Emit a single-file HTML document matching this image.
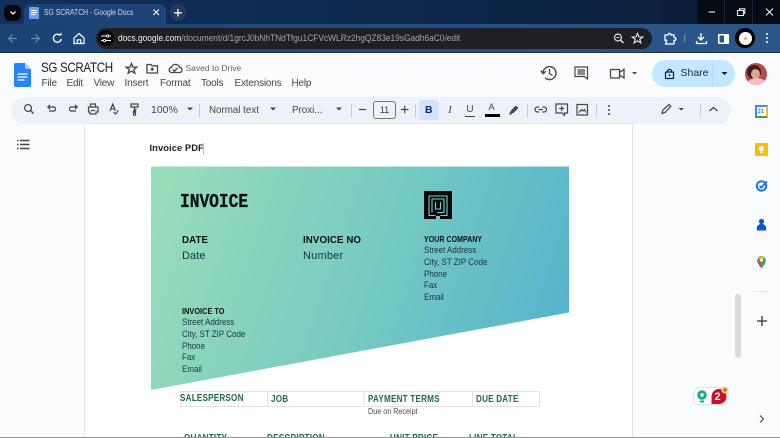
<!DOCTYPE html>
<html>
<head>
<meta charset="utf-8">
<style>
html,body{margin:0;padding:0;width:780px;height:438px;overflow:hidden;background:#f9fbfd;font-family:"Liberation Sans",sans-serif}
#r{position:relative;width:780px;height:438px;overflow:hidden}
.a{position:absolute;white-space:nowrap;transform-origin:0 50%}
svg{position:absolute;overflow:visible}
.ic{fill:none;stroke:#444746;stroke-width:1.3}
.m{font-size:10px;color:#444746;top:77px;line-height:13px;letter-spacing:-.2px}
.d{color:#17343c;font-size:9px;line-height:12px;transform:scaleX(.885)}
.b{color:#0a1214;font-weight:bold}
.g{color:#1f6b45;font-weight:bold;font-size:10.500px;letter-spacing:.3px;transform:scaleX(.77);line-height:14px}
</style>
</head>
<body>
<div id="r">
<!-- tab strip -->
<div class="a" style="left:0;top:0;width:780px;height:24px;background:linear-gradient(90deg,#12305c 0,#0f2b52 35%,#0c2345 70%,#0b1d38 100%)"></div>
<div class="a" style="left:4px;top:5px;width:17px;height:16px;background:#05070c;border-radius:6px"></div>
<svg style="left:9px;top:10px" width="8" height="6"><path d="M1.500 1.500 4 4 6.500 1.500" fill="none" stroke="#fff" stroke-width="1.300"/></svg>
<div class="a" style="left:24px;top:4px;width:142px;height:20px;background:#1d4476;border-radius:7px 7px 0 0"></div>
<div class="a" style="left:29px;top:7px;width:10px;height:12px;background:#6a9df2;border-radius:1px"></div>
<svg style="left:31px;top:10px" width="7" height="7"><path d="M0 .5H6M0 2.500H6M0 4.500H4.500" stroke="#fff" stroke-width="1"/></svg>
<div class="a" style="left:44px;top:6px;font-size:8.600px;line-height:13px;color:#cfdbea;transform:scaleX(.79)">SG SCRATCH - Google Docs</div>
<svg style="left:151.500px;top:8px" width="9" height="9"><path d="M1.500 1.500 7 7M7 1.500 1.500 7" stroke="#f0f4fa" stroke-width="1.100"/></svg>
<div class="a" style="left:170px;top:4px;width:16px;height:17px;background:#253a5a;border-radius:50%"></div>
<svg style="left:173px;top:8px" width="10" height="10"><path d="M5 1V8.500M1.200 4.800H8.800" stroke="#fff" stroke-width="1.300"/></svg>
<!-- window controls -->
<div class="a" style="left:697px;top:0;width:83px;height:24px;background:#060c14"></div>
<div class="a" style="left:724px;top:0;width:1px;height:24px;background:#1a2330"></div>
<div class="a" style="left:752px;top:0;width:1px;height:24px;background:#1a2330"></div>
<svg style="left:706px;top:6px" width="70" height="14"><path d="M2.500 6H9" stroke="#d8dde4" stroke-width="1.200"/><path d="M31.500 4.500H37.500V9.500H31.500ZM33.500 4.500V2.800H38.800V7.500H37.500" fill="none" stroke="#e8ebef" stroke-width="1.100"/><path d="M60 2.500 67 9.500M67 2.500 60 9.500" stroke="#e8ebef" stroke-width="1.100"/></svg>
<!-- toolbar -->
<div class="a" style="left:0;top:24px;width:780px;height:29px;background:linear-gradient(90deg,#1a4273 0,#234d80 50%,#2c5789 100%)"></div>
<div class="a" style="left:0;top:51.500px;width:780px;height:1.500px;background:#1a3350"></div>
<svg style="left:8px;top:32px" width="78" height="13">
<path d="M1 6.500H9M4.500 2.500 .8 6.500 4.500 10.500" fill="none" stroke="#6f90b8" stroke-width="1.200"/>
<path d="M23 6.500H31M27.500 2.500 31.200 6.500 27.500 10.500" fill="none" stroke="#6f90b8" stroke-width="1.200"/>
<path d="M52 3.200A4 4 0 1 0 53.300 7" fill="none" stroke="#fff" stroke-width="1.300"/><path d="M50 3.500H53.500V.5Z" fill="#fff"/>
<path d="M71 1.500 76 6V11.500H66V6Z M69.300 11.500V7.800H72.700V11.500" fill="none" stroke="#fff" stroke-width="1.200"/>
</svg>
<div class="a" style="left:96px;top:28px;width:556px;height:20.500px;background:#1f2023;border-radius:11px"></div>
<div class="a" style="left:98px;top:30px;width:16px;height:16px;background:#050505;border-radius:50%"></div>
<svg style="left:101px;top:34px" width="10" height="9"><path d="M0 2H5M8 2H10M0 6.500H2M5 6.500H10" stroke="#fff" stroke-width="1"/><circle cx="6.500" cy="2" r="1.200" fill="none" stroke="#fff" stroke-width=".8"/><circle cx="3.500" cy="6.500" r="1.200" fill="none" stroke="#fff" stroke-width=".8"/></svg>
<div class="a" style="left:118px;top:32px;font-size:9.600px;line-height:13px;color:#f1f3f4;letter-spacing:-.03px;transform:scaleX(.877)">docs.google.com<span style="color:#a3a6aa">/document/d/1grcJ0bNhTNdTfgu1CFVcWLRz2hgQZ83e19sGadh6aC0/edit</span></div>
<svg style="left:612px;top:32px" width="36" height="13">
<circle cx="6" cy="5.500" r="3.500" fill="none" stroke="#dfe1e4" stroke-width="1.200"/><path d="M8.500 8 11.500 11" stroke="#dfe1e4" stroke-width="1.400"/><path d="M4.500 5.500H7.500" stroke="#dfe1e4"/>
<path d="M25.500 1.500 27 5H30.800L27.800 7.300 28.900 11 25.500 8.800 22.100 11 23.200 7.300 20.200 5H24Z" fill="none" stroke="#e8eaed" stroke-width="1.100"/>
</svg>
<svg style="left:663px;top:32px" width="110" height="14">
<path d="M2 3H5C5 .8 8 .8 8 3H11V5.500C13.500 5.500 13.500 8.500 11 8.500V12H2.500L3.500 9.500C4.500 7.500 1.500 7.500 2 9Z" fill="none" stroke="#fff" stroke-width="1.300"/>
<path d="M21.700 2V10" stroke="#7f9ab8" stroke-width="1"/>
<path d="M38 1V7.500M35 5 38 8 41 5M33.500 9V11.500H43.500V9" fill="none" stroke="#fff" stroke-width="1.300"/>
<rect x="55" y="2" width="11" height="10" fill="#fff" rx="1"/><rect x="56.500" y="3.500" width="4.500" height="7" fill="#2a5585"/>
<circle cx="104" cy="2" r="1" fill="#fff"/><circle cx="104" cy="6" r="1" fill="#fff"/><circle cx="104" cy="10" r="1" fill="#fff"/>
</svg>
<div class="a" style="left:735px;top:28px;width:20px;height:20px;background:#000;border-radius:50%"></div>
<div class="a" style="left:739px;top:32px;width:12.500px;height:12.500px;background:#fff;border-radius:50%"></div>
<div class="a" style="left:743.500px;top:36.500px;width:3.500px;height:3.500px;background:#efb52e;border-radius:50%"></div>
<!-- app header -->
<div class="a" style="left:0;top:53px;width:780px;height:385px;background:#f9fbfd"></div>
<svg style="left:14px;top:63px" width="18" height="24"><path d="M1.500 0H11L17 6V22.500A1.500 1.500 0 0 1 15.500 24H1.500A1.500 1.500 0 0 1 0 22.500V1.500A1.500 1.500 0 0 1 1.500 0Z" fill="#2684fc"/><path d="M11 0 17 6H12.500A1.500 1.500 0 0 1 11 4.500Z" fill="#a6c8fa"/><path d="M3.500 11H13.500M3.500 14H13.500M3.500 17H10.500" stroke="#fff" stroke-width="1.200"/></svg>
<div class="a" style="left:41px;top:58.500px;font-size:13.800px;line-height:17px;color:#1f1f1f;letter-spacing:-.4px;transform:scaleX(.84)">SG SCRATCH</div>
<svg style="left:125px;top:62px" width="60" height="13">
<path d="M6.500 1.500 8 5.200H11.800L8.800 7.600 9.900 11.300 6.500 9.100 3.100 11.300 4.200 7.600 1.200 5.200H5Z" class="ic" stroke-width="1.100"/>
<path d="M22 2.500H26L27 3.800H32.500V11H22Z M27.200 5.500V9M25.500 7.200H29" class="ic" stroke-width="1.100"/>
<path d="M46 10.500H54.500A2.600 2.600 0 0 0 54.500 5.300 4.200 4.200 0 0 0 46.500 5.300 2.700 2.700 0 0 0 46 10.500ZM47.800 7.800 49.500 9.200 52.500 6" class="ic" stroke-width="1.050"/>
</svg>
<div class="a" style="left:185.500px;top:61.500px;font-size:8.500px;line-height:12px;color:#5f6368">Saved to Drive</div>
<div class="a m" style="left:41.500px">File</div>
<div class="a m" style="left:66.500px">Edit</div>
<div class="a m" style="left:93.500px">View</div>
<div class="a m" style="left:124.500px">Insert</div>
<div class="a m" style="left:160px">Format</div>
<div class="a m" style="left:201px">Tools</div>
<div class="a m" style="left:234.500px">Extensions</div>
<div class="a m" style="left:291.500px">Help</div>
<!-- right header -->
<svg style="left:540px;top:64px" width="210" height="18">
<path d="M3 9A6.500 6.500 0 1 1 5 13.800" fill="none" stroke="#444746" stroke-width="1.400"/><path d="M.8 6.500 3.100 9.800 6 7.200" fill="none" stroke="#444746" stroke-width="1.300"/><path d="M9.500 5V9.500L12.500 11.500" fill="none" stroke="#444746" stroke-width="1.300"/>
<path d="M35 3H47.500V15L44.500 12.500H35Z M37.500 6H45M37.500 8H45M37.500 10H45" fill="none" stroke="#444746" stroke-width="1.200"/>
<path d="M71 5.500H79.500V14H71A1 1 0 0 1 70.500 13V6.500A1 1 0 0 1 71 5.500ZM79.500 8.500 84 5.500V14L79.500 11" fill="none" stroke="#444746" stroke-width="1.300"/>
<path d="M92 8H97L94.500 10.500Z" fill="#444746"/>
</svg>
<div class="a" style="left:652px;top:60px;width:83px;height:26.500px;background:#c2e7ff;border-radius:14px"></div>
<div class="a" style="left:712px;top:60px;width:1px;height:26.500px;background:#b4dcf7"></div>
<svg style="left:664px;top:67px" width="11" height="13"><path d="M3.500 5V3.500A2.300 2.300 0 0 1 7.500 3.500V5" fill="none" stroke="#001d35" stroke-width="1.100"/><rect x="1.500" y="5" width="8" height="6.500" rx=".8" fill="none" stroke="#001d35" stroke-width="1.200"/><circle cx="5.500" cy="8.200" r="1" fill="#001d35"/></svg>
<div class="a" style="left:680.500px;top:66px;font-size:10.500px;line-height:14px;color:#0d2b45">Share</div>
<svg style="left:720px;top:71px" width="9" height="6"><path d="M1.500 1H7.500L4.500 4Z" fill="#001d35"/></svg>
<div class="a" style="left:745px;top:62.500px;width:22px;height:22px;border-radius:50%;background:#b64a4c;overflow:hidden">
<div class="a" style="left:2px;top:2px;width:14px;height:14px;background:#3a1f1e;border-radius:50%"></div>
<div class="a" style="left:6px;top:6px;width:9px;height:10px;background:#dfa68f;border-radius:50%"></div>
<div class="a" style="left:3px;top:15px;width:17px;height:9px;background:#f3bfc2;border-radius:50%"></div>
</div>
<!-- format toolbar -->
<div class="a" style="left:11px;top:97px;width:720px;height:26.500px;background:#edf2fa;border-radius:14px"></div>
<svg style="left:0;top:97px" width="780" height="27">
<g fill="none" stroke="#444746" stroke-width="1.200">
<circle cx="28" cy="11" r="3.400"/><path d="M30.500 13.500 33.500 16.500" stroke-width="1.500"/>
<path d="M49 14H54.500A2.500 2.500 0 0 0 54.500 10H48M50 8 47.800 10 50 12"/>
<path d="M76 14H70.500A2.500 2.500 0 0 1 70.500 10H77M75 8 77.200 10 75 12"/>
<path d="M90 10H98V15H96V17H90V15H88.500V10ZM90.500 10V7H95.500V10M91 13.500H95"/>
<path d="M110 14 112.800 7 115.500 14M111 11.800H114.500M113.500 15 115.500 17 118.500 13.500"/>
<path d="M131 7H138V10H131ZM134.500 10V12.500L136.500 12.500M134.500 12.500V16M133.500 14H135.500V18H133.500Z"/>
</g>
<path d="M187 10.500H193L190 13.500Z" fill="#444746"/>
<path d="M199.500 7V20" stroke="#c7ccd3"/>
<path d="M270 10.500H276L273 13.500Z" fill="#444746"/>
<path d="M336 10.500H342L339 13.500Z" fill="#444746"/>
<path d="M351.500 7V20" stroke="#c7ccd3"/>
<path d="M359 12.500H366" stroke="#444746" stroke-width="1.200"/>
<path d="M401 12.500H408.500M404.700 8.700V16.300" stroke="#444746" stroke-width="1.200"/>
<path d="M415.500 7V20" stroke="#c7ccd3"/><path d="M527.500 7V20" stroke="#c7ccd3"/><path d="M596.500 7V20" stroke="#c7ccd3"/><path d="M700.500 7V20" stroke="#c7ccd3"/>
<g fill="none" stroke="#444746" stroke-width="1.200">
<path d="M539 10H537.500A2.500 2.500 0 0 0 537.500 15H539M542.500 10H544A2.500 2.500 0 0 1 544 15H542.500M538.500 12.500H543"/>
<path d="M556 7H567.500V16H564.500V18.500L562 16H556ZM561.700 9V14M559.200 11.500H564.200"/>
<path d="M577 7.500H587.500V18H577ZM579 15.500 581.500 12.500 583 14 584.500 12.500 586 15.500"/>
<path d="M662 16.500 663 13 669 7.500 670.800 9.300 665 15.500Z"/>
<path d="M709.500 14 713.500 10.500 717.500 14" stroke-width="1.300"/>
</g>
<circle cx="609" cy="9" r="1" fill="#444746"/><circle cx="609" cy="13" r="1" fill="#444746"/><circle cx="609" cy="17" r="1" fill="#444746"/>
<path d="M678.500 11H684L681.250 13.500Z" fill="#444746"/>
</svg>
<div class="a" style="left:151px;top:103px;font-size:10.500px;line-height:14px;color:#444746">100%</div>
<div class="a" style="left:209px;top:102.500px;font-size:10.500px;line-height:14px;color:#444746;transform:scaleX(.93)">Normal text</div>
<div class="a" style="left:291.500px;top:102.500px;font-size:10.500px;line-height:14px;color:#444746;transform:scaleX(.93)">Proxi...</div>
<div class="a" style="left:373px;top:101px;width:21px;height:16px;border:1px solid #747775;border-radius:3px;text-align:center;font-size:9px;line-height:16px;color:#333">11</div>
<div class="a" style="left:419px;top:100px;width:19.500px;height:20px;background:#d3e3fd;border-radius:3px;text-align:center;font-size:10.500px;line-height:20px;font-weight:bold;color:#0b2e6a">B</div>
<div class="a" style="left:445px;top:103px;width:10px;text-align:center;font-size:11px;line-height:14px;font-style:italic;color:#444746;font-family:'Liberation Serif',serif">I</div>
<div class="a" style="left:465px;top:103px;width:10px;text-align:center;font-size:10px;line-height:13px;color:#444746;border-bottom:1px solid #444746;height:13px">U</div>
<div class="a" style="left:484px;top:102px;width:15px;text-align:center;font-size:9.500px;line-height:12px;color:#444746">A</div>
<div class="a" style="left:484.500px;top:114px;width:15px;height:2.500px;background:#000"></div>
<svg style="left:508px;top:103px" width="13" height="12"><path d="M1.500 10.500 3 7.500 8 2.500 10.500 5 5.500 10Z" fill="#444746"/><path d="M1 11H4" stroke="#444746"/></svg>
<!-- doc page -->
<div class="a" style="left:85px;top:124px;width:547px;height:314px;background:#fff;box-shadow:0 0 0 1px #e3e6ea"></div>
<svg style="left:16px;top:139px" width="14" height="12"><g stroke="#444746" stroke-width="1.500"><path d="M4 1.500H13.500M4 5.500H13.500M4 9.500H13.500"/><path d="M1 1.500H2.500M1 5.500H2.500M1 9.500H2.500"/></g></svg>
<div class="a" style="left:149.500px;top:142px;font-size:9.300px;line-height:13px;font-weight:bold;color:#1b1b1b;letter-spacing:.1px">Invoice PDF</div>
<div class="a" style="left:202.500px;top:143px;width:1px;height:12px;background:#bbb"></div>
<!-- invoice graphic -->
<svg style="left:151px;top:166px" width="418" height="225">
<defs><linearGradient id="gr" gradientUnits="userSpaceOnUse" x1="0" y1="30" x2="420" y2="170"><stop offset="0" stop-color="#99dcba"/><stop offset=".5" stop-color="#79cbc2"/><stop offset="1" stop-color="#54b3cc"/></linearGradient></defs>
<path d="M0 .5H418V146.500L0 224Z" fill="url(#gr)"/>
</svg>
<div class="a b" style="left:180px;top:191.500px;font-family:'Liberation Mono',monospace;font-size:19px;line-height:21px;letter-spacing:-.1px;transform:scaleX(.86);-webkit-text-stroke:.25px #0a1214">INVOICE</div>
<div class="a b" style="left:182px;top:234px;font-size:9.700px;line-height:13px;letter-spacing:.1px">DATE</div>
<div class="a" style="left:182px;top:249px;font-size:11px;line-height:14px;letter-spacing:.1px;color:#17343c">Date</div>
<div class="a b" style="left:303px;top:234px;font-size:9.700px;line-height:13px;letter-spacing:.1px">INVOICE NO</div>
<div class="a" style="left:303px;top:249px;font-size:11px;line-height:14px;letter-spacing:.2px;color:#17343c">Number</div>
<svg style="left:424px;top:191px" width="28" height="28"><path d="M0 0H28V28H16V25H12V28H0Z" fill="#050708"/><g fill="none" stroke="#7fd0c4" stroke-width="1.100"><path d="M11.500 24.500H5V5H23V24.500H16.500"/><path d="M8 21.500V8H20V21.500H13"/><path d="M11.500 11V18H16.500V11"/></g></svg>
<div class="a b" style="left:424px;top:233px;font-size:8.500px;line-height:12px;letter-spacing:.1px;transform:scaleX(.82)">YOUR COMPANY</div>
<div class="a d" style="left:424px;top:245px;line-height:11.750px;white-space:pre">Street Address
City, ST ZIP Code
Phone
Fax
Email</div>
<div class="a b" style="left:182px;top:305px;font-size:8.500px;line-height:12px;letter-spacing:.05px;transform:scaleX(.86)">INVOICE TO</div>
<div class="a d" style="left:182px;top:317px;line-height:11.750px;white-space:pre">Street Address
City, ST ZIP Code
Phone
Fax
Email</div>
<!-- table -->
<svg style="left:180px;top:390px" width="361" height="18"><g fill="none" stroke="#e2e2e2" stroke-width="1"><path d="M.500 1.500H359.500V16.500H.500ZM87.500 1.500V16.500M184 1.500V16.500M292.500 1.500V16.500"/></g></svg>
<div class="a g" style="left:180px;top:390.500px">SALESPERSON</div>
<div class="a g" style="left:271px;top:391.500px">JOB</div>
<div class="a g" style="left:367.500px;top:391.500px">PAYMENT TERMS</div>
<div class="a g" style="left:476px;top:391.500px">DUE DATE</div>
<div class="a" style="left:367.500px;top:406px;font-size:8px;line-height:12px;color:#4b4b4b;transform:scaleX(.9)">Due on Receipt</div>
<div class="a g" style="left:184px;top:431px">QUANTITY</div>
<div class="a g" style="left:266.500px;top:431px">DESCRIPTION</div>
<div class="a g" style="left:390px;top:431px">UNIT PRICE</div>
<div class="a g" style="left:468.500px;top:431px">LINE TOTAL</div>
<!-- scrollbar -->
<div class="a" style="left:734.500px;top:294px;width:6px;height:64px;background:#d9dbde;border-radius:3px"></div>
<!-- side panel -->
<div class="a" style="left:755px;top:105px;width:12.500px;height:13px;background:#fff;border:2px solid #4285f4;box-sizing:border-box;border-bottom-color:#34a853;border-right-color:#fbbc04"></div>
<div class="a" style="left:757.500px;top:107.500px;font-size:6px;line-height:8px;color:#4285f4;font-weight:bold">31</div>
<div class="a" style="left:755px;top:142.500px;width:12.500px;height:13px;background:#fbbc04;border-radius:1px"></div>
<svg style="left:755px;top:142.500px" width="13" height="13"><circle cx="6.300" cy="5.500" r="2.600" fill="#fff"/><rect x="5" y="8.500" width="2.600" height="1.500" fill="#fff"/></svg>
<svg style="left:755px;top:179px" width="14" height="14"><circle cx="6.500" cy="7" r="4.700" fill="none" stroke="#1a73e8" stroke-width="2"/><path d="M4.500 7 6.200 8.700 12 2.500" fill="none" stroke="#1a73e8" stroke-width="1.800"/></svg>
<svg style="left:756px;top:218px" width="12" height="14"><circle cx="5.500" cy="3.500" r="2.600" fill="#0b57d0"/><path d="M.8 12.500V10A4 3.500 0 0 1 10.200 10V12.500Z" fill="#0b57d0"/></svg>
<svg style="left:756px;top:255px" width="12" height="14"><path d="M5.500 13.500C3.500 10.500 1.200 8.500 1.200 5.200A4.300 4.300 0 0 1 5.500 1Z" fill="#ea4335"/><path d="M5.500 13.500C7.500 10.500 9.800 8.500 9.800 5.200A4.300 4.300 0 0 0 5.500 1Z" fill="#34a853"/><path d="M2 3 5.500 1 9 2.500 5.500 5.500Z" fill="#fbbc04"/><path d="M2 3 1.200 6 3 8 5.500 5.500Z" fill="#4285f4"/><circle cx="5.500" cy="5.200" r="1.500" fill="#fff"/></svg>
<div class="a" style="left:753px;top:291px;width:15px;height:1px;background:#e3e6ea"></div>
<svg style="left:755.500px;top:315px" width="12" height="12"><path d="M6 1V11M1 6H11" stroke="#333" stroke-width="1.300"/></svg>
<svg style="left:758px;top:414px" width="8" height="10"><path d="M2 1.500 5.500 5 2 8.500" fill="none" stroke="#555" stroke-width="1.200"/></svg>
<!-- badge -->
<div class="a" style="left:692.500px;top:387px;width:36px;height:18px;background:#fff;border:1px solid #dfe3e6;border-radius:7px 9px 9px 4px;box-sizing:border-box"></div>
<svg style="left:696px;top:385px" width="36" height="22">
<circle cx="6" cy="10" r="4.800" fill="#1aa98c"/><circle cx="6" cy="10" r="1.800" fill="#fff"/><rect x="4" y="15.500" width="4" height="2" fill="#1aa98c"/>
<path d="M23 4A7.500 7.500 0 0 1 23 19H15.500V11.500A7.500 7.500 0 0 1 23 4Z" fill="#c8102e"/>
<circle cx="29" cy="5" r="3.600" fill="#f5cd84"/><path d="M29 3V7M27 5H31" stroke="#8a5a10" stroke-width="1"/>
</svg>
<div class="a" style="left:714.500px;top:390px;font-size:11px;line-height:14px;font-weight:bold;color:#fff">2</div>
<!-- bottom edge -->
<div class="a" style="left:0;top:436.500px;width:780px;height:1.500px;background:#8f9296"></div>
</div>
</body>
</html>
